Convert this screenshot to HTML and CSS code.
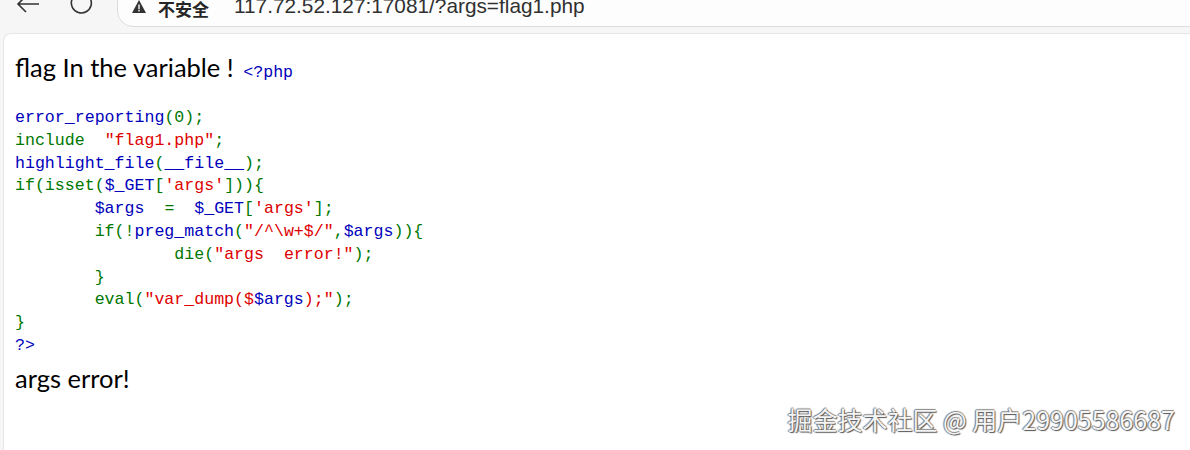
FILE: index.html
```html
<!DOCTYPE html>
<html lang="zh-CN">
<head>
<meta charset="utf-8">
<title>flag</title>
<link rel="stylesheet" href="styles.css">
</head>
<body>
<div class="toolbar">
  <div class="nav">
    <svg class="icon back" width="26" height="20" viewBox="0 0 26 20"><path d="M24 4H3M11 -4L3 4L11 12" fill="none" stroke="#333" stroke-width="1.6"/></svg>
    <svg class="icon reload" width="26" height="20" viewBox="0 0 26 20"><path d="M21 -2A10 10 0 1 1 8 -6" fill="none" stroke="#333" stroke-width="1.6"/></svg>
  </div>
  <div class="omnibox">
    <svg class="warn" width="14" height="13" viewBox="0 0 14 13"><path d="M7 0L14 13H0Z" fill="#333"/><rect x="6.3" y="4.5" width="1.4" height="4.8" fill="#fff"/><rect x="6.3" y="10" width="1.4" height="1.4" fill="#fff"/></svg>
    <span class="insecure">不安全</span>
    <span class="url">117.72.52.127:17081/?args=flag1.php</span>
  </div>
</div>
<div class="page">
  <div class="content">
    <div class="line1">flag In the variable ! <code class="code php-open"><span class="b">&lt;?php</span></code></div>
<code class="code block"><span class="b">error_reporting</span><span class="g">(0);</span>
<span class="g">include&nbsp;&nbsp;</span><span class="r">"flag1.php"</span><span class="g">;</span>
<span class="b">highlight_file</span><span class="g">(</span><span class="b">__file__</span><span class="g">);</span>
<span class="g">if(isset(</span><span class="b">$_GET</span><span class="g">[</span><span class="r">'args'</span><span class="g">])){</span>
<span class="b">&nbsp;&nbsp;&nbsp;&nbsp;&nbsp;&nbsp;&nbsp;&nbsp;$args&nbsp;&nbsp;</span><span class="g">=&nbsp;&nbsp;</span><span class="b">$_GET</span><span class="g">[</span><span class="r">'args'</span><span class="g">];</span>
<span class="g">&nbsp;&nbsp;&nbsp;&nbsp;&nbsp;&nbsp;&nbsp;&nbsp;if(!</span><span class="b">preg_match</span><span class="g">(</span><span class="r">"/^\w+$/"</span><span class="g">,</span><span class="b">$args</span><span class="g">)){</span>
<span class="g">&nbsp;&nbsp;&nbsp;&nbsp;&nbsp;&nbsp;&nbsp;&nbsp;&nbsp;&nbsp;&nbsp;&nbsp;&nbsp;&nbsp;&nbsp;&nbsp;die(</span><span class="r">"args&nbsp;&nbsp;error!"</span><span class="g">);</span>
<span class="g">&nbsp;&nbsp;&nbsp;&nbsp;&nbsp;&nbsp;&nbsp;&nbsp;}</span>
<span class="g">&nbsp;&nbsp;&nbsp;&nbsp;&nbsp;&nbsp;&nbsp;&nbsp;eval(</span><span class="r">"var_dump($</span><span class="b">$args</span><span class="r">);"</span><span class="g">);</span>
<span class="g">}</span>
<span class="b">?&gt;</span></code>
    <div class="out">args error!</div>
  </div>
  <div class="watermark">掘金技术社区 @ 用户29905586687</div>
</div>
</body>
</html>
```
FILE: styles.css
```css
html, body {
  margin: 0;
  padding: 0;
  background: #f6f6f6;
  height: 100%;
  overflow: hidden;
}
.toolbar {
  height: 33px;
  display: flex;
  align-items: flex-start;
  background: #f6f6f6;
}
.nav {
  display: flex;
  gap: 28px;
  padding-left: 15px;
  width: 102px;
}
.icon { display: block; }
.omnibox {
  margin-top: -14px;
  height: 41px;
  flex: 1;
  margin-right: -30px;
  background: #fdfdfd;
  border: 1px solid #dcdcdc;
  border-radius: 16px;
  display: flex;
  align-items: flex-end;
  padding: 0 0 9px 14px;
  box-sizing: border-box;
  font-family: "Noto Sans CJK SC", "Liberation Sans", sans-serif;
  color: #262626;
  line-height: 1;
}
.warn { margin-bottom: 4px; margin-right: 12px; }
.insecure { font-size: 17px; font-weight: 700; margin-right: 25px; }
.url { font-family: "Liberation Sans", Arial, sans-serif; font-size: 20.8px; color: #303030; }
.page {
  position: relative;
  margin-left: 3px;
  height: calc(100% - 33px);
  background: #fff;
  border-top: 1px solid #e6e6e6;
  border-left: 1px solid #e6e6e6;
  border-top-left-radius: 8px;
  box-sizing: border-box;
}
.content {
  padding: 16px 0 0 11px;
  font-family: Lato, "Noto Sans", sans-serif;
  font-size: 25.5px;
  color: #000;
}
.line1 { line-height: 34px; }
.code {
  font-family: "Liberation Mono", "DejaVu Sans Mono", monospace;
  font-size: 16.6px;
}
.php-open { margin-left: 3px; }
.block {
  display: block;
  white-space: pre;
  line-height: 22.8px;
  margin-top: 17px;
}
.b { color: #0000bb; }
.g { color: #007700; }
.r { color: #dd0000; }
.out { margin-top: 4px; line-height: 32px; }
.watermark {
  position: absolute;
  right: 15px;
  bottom: 13px;
  font-family: "Noto Sans CJK SC", "Liberation Sans", sans-serif;
  font-size: 25px;
  color: #f4f4f4;
  text-shadow: 1px 1px 1px #555, -1px 0 1px #777, 0 -1px 1px #888;
}
```
